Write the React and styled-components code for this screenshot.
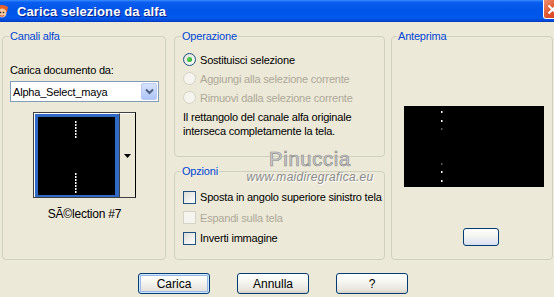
import styled, { createGlobalStyle } from "styled-components";

const GlobalStyle = createGlobalStyle`
  html, body {
    margin: 0;
    padding: 0;
    background: #ece9d8;
  }
  * {
    box-sizing: border-box;
  }
`;

const FONT = `"Liberation Sans", Arial, sans-serif`;

const Window = styled.div`
  position: relative;
  width: 554px;
  height: 297px;
  overflow: hidden;
  display: flex;
  flex-direction: column;
  background: #ece9d8;
  font: 11px ${FONT};
  letter-spacing: -0.2px;
  color: #000;
`;

const TitleBar = styled.div`
  height: 22px;
  flex: none;
  display: flex;
  align-items: center;
  background: linear-gradient(
    #3a8cff 0%,
    #0a5ff0 10%,
    #0055e8 45%,
    #0058ec 80%,
    #0048d8 94%,
    #0036b8 100%
  );
`;

const AppIcon = styled.svg`
  width: 16px;
  height: 16px;
  margin-left: -6px;
  flex: none;
`;

const Title = styled.div`
  margin-left: 7px;
  flex: 1;
  color: #fff;
  font: bold 13px ${FONT};
  text-shadow: 1px 1px 0 #0a1e8a;
  letter-spacing: 0.1px;
`;

const CloseButton = styled.div`
  width: 21px;
  height: 19px;
  margin-right: -10px;
  align-self: flex-start;
  border: 1px solid #fff;
  border-top: none;
  border-radius: 0 0 0 3px;
  background: linear-gradient(135deg, #f09070, #e0542e 50%, #c83a18);
  display: flex;
  align-items: center;
  padding-left: 3px;
`;

const Body = styled.div`
  flex: 1;
  display: flex;
  flex-direction: column;
  padding: 8px 2px 0 2px;
`;

const Panels = styled.div`
  display: flex;
  gap: 6px;
  height: 230px;
`;

const Column = styled.div`
  display: flex;
  flex-direction: column;
  gap: 8px;
  width: ${(p) => p.$width}px;
  margin-left: ${(p) => p.$offset || 0}px;
`;

const Group = styled.fieldset`
  margin: 0;
  padding: ${(p) => p.$pad || "0 6px 0 7px"};
  width: ${(p) => (p.$width ? `${p.$width}px` : "auto")};
  flex: ${(p) => (p.$grow ? 1 : "none")};
  border: 1px solid #d0d0bf;
  border-radius: 4px;
  min-width: 0;
  display: flex;
  flex-direction: column;
`;

const Legend = styled.legend`
  margin-left: ${(p) => p.$shift ?? -1}px;
  padding: 0 1px;
  color: #0046d5;
  line-height: 13px;
`;

const Label = styled.div`
  line-height: 13px;
  margin-top: ${(p) => p.$top || 0}px;
`;

const Combo = styled.div`
  margin-top: 4px;
  height: 21px;
  border: 1px solid #7f9db9;
  background: #fff;
  display: flex;
  align-items: center;
  padding: 0 1px 0 2px;
`;

const ComboText = styled.span`
  flex: 1;
`;

const ComboArrow = styled.div`
  width: 16px;
  height: 17px;
  border: 1px solid #b9cbf3;
  border-radius: 2px;
  background: linear-gradient(#d8e4fc, #bfd1fa 60%, #aec4f6);
  display: flex;
  align-items: center;
  justify-content: center;
`;

const Thumb = styled.div`
  margin: 10px auto 0;
  width: 103px;
  height: 86px;
  display: flex;
  border: 1px solid #404040;
  border-right-color: #000;
  background: #fff;
`;

const ThumbImage = styled.div`
  width: 84px;
  padding: 3px 3px 2px 3px;
  margin: 1px 0 0 1px;
  background: #316ac5;
  display: flex;
`;

const ThumbDrop = styled.div`
  flex: 1;
  background: #ece9d8;
  border-left: 1px solid #404040;
  border-top: 1px solid #fff;
  display: flex;
  align-items: center;
  justify-content: center;
`;

const Caption = styled.div`
  margin-top: 10px;
  text-align: center;
  font-size: 12px;
  line-height: 13px;
`;

const OptionList = styled.div`
  display: flex;
  flex-direction: column;
  margin-top: ${(p) => p.$top || 0}px;
`;

const OptionRow = styled.label`
  height: ${(p) => p.$h || 19}px;
  display: flex;
  align-items: center;
  gap: 4px;
  margin-left: 1px;
  white-space: nowrap;
  color: ${(p) => (p.$disabled ? "#aca899" : "#000")};
`;

const RadioMark = styled.span`
  width: 13px;
  height: 13px;
  border-radius: 50%;
  flex: none;
  border: 1px solid ${(p) => (p.$disabled ? "#d5d3c6" : "#1c5180")};
  background: ${(p) =>
    p.$disabled ? "#f5f4ef" : "linear-gradient(135deg, #dcdcd7, #ffffff)"};
  display: flex;
  align-items: center;
  justify-content: center;
  &::after {
    content: "";
    display: ${(p) => (p.$checked ? "block" : "none")};
    width: 5px;
    height: 5px;
    border-radius: 50%;
    background: radial-gradient(circle at 35% 35%, #55d855, #21a121);
  }
`;

const CheckMark = styled.span`
  width: 13px;
  height: 13px;
  flex: none;
  border: 1px solid ${(p) => (p.$disabled ? "#d5d3c6" : "#1c5180")};
  background: ${(p) =>
    p.$disabled ? "#f5f4ef" : "linear-gradient(135deg, #dcdcd7, #ffffff)"};
`;

const Note = styled.p`
  margin: 3px 0 0 1px;
  line-height: 14px;
`;

const Preview = styled.div`
  margin: 63px 0 0 5px;
`;

const SmallButton = styled.button`
  width: 36px;
  height: 18px;
  margin: 41px 0 0 64px;
  border: 1px solid #003c74;
  border-radius: 3px;
  background: linear-gradient(#ffffff, #f4f4f0 45%, #e3e6f4 80%, #d6dff0);
  padding: 0;
`;

const ButtonRow = styled.div`
  display: flex;
  justify-content: center;
  gap: 27px;
  margin-top: 13px;
  padding-right: 8px;
`;

const Button = styled.button`
  width: 72px;
  height: 21px;
  padding: 0;
  border: 1px solid #003c74;
  border-radius: 3px;
  background: linear-gradient(#ffffff, #f6f6f2 40%, #e6e4dc 85%, #d6d0c5);
  box-shadow: ${(p) =>
    p.$default
      ? "inset 0 0 0 1px #cee7ff, inset 0 0 0 2px #98b8ea"
      : "none"};
  font: 12px ${FONT};
  color: #000;
`;

const Watermark = styled.div`
  position: absolute;
  left: 244px;
  top: 149px;
  width: 132px;
  display: flex;
  flex-direction: column;
  align-items: center;
  pointer-events: none;
  letter-spacing: 0;
`;

const WatermarkName = styled.div`
  font: 20px ${FONT};
  letter-spacing: 0.8px;
  color: #d4d4d4;
  -webkit-text-stroke: 0.7px #8c8c8c;
  line-height: 20px;
`;

const WatermarkSite = styled.div`
  font: italic 12px ${FONT};
  letter-spacing: 0.3px;
  color: #8a8a8a;
  text-shadow: 1px 1px 0 #ffffff;
  line-height: 14px;
  margin-top: 1px;
`;

function Radio({ checked, disabled, children }) {
  return (
    <OptionRow $disabled={disabled}>
      <RadioMark $checked={checked} $disabled={disabled} />
      {children}
    </OptionRow>
  );
}

function Check({ disabled, children }) {
  return (
    <OptionRow $disabled={disabled} $h={20.5}>
      <CheckMark $disabled={disabled} />
      {children}
    </OptionRow>
  );
}

function DashedImage({ width, height, x, dashes }) {
  return (
    <svg width={width} height={height} style={{ display: "block" }}>
      <rect width={width} height={height} fill="#000" />
      {dashes.map(([y, o], i) => (
        <rect key={i} x={x} y={y} width="1.5" height="2" fill="#fff" opacity={o} />
      ))}
    </svg>
  );
}

const thumbDashes = [
  [4, 1], [7, 1], [10, 1], [13, 1], [16, 1], [19, 1],
  [56, 1], [59, 1], [62, 1], [65, 1], [68, 1], [71, 1], [74, 1],
];

const previewDashes = [
  [5, 1], [14, 1], [22, 0.35], [57, 0.35], [65, 1], [74, 1],
];

export default function App() {
  return (
    <>
      <GlobalStyle />
      <Window>
        <TitleBar>
          <AppIcon viewBox="0 0 16 16">
            <path d="M2 4 Q8 0 14 4 L13 9 L3 9 Z" fill="#e8602a" />
            <circle cx="8" cy="10" r="4.5" fill="#f4c9a0" />
            <circle cx="6.5" cy="9.5" r="0.8" fill="#222" />
            <circle cx="9.5" cy="9.5" r="0.8" fill="#222" />
            <path d="M6 12.5 Q8 14 10 12.5" stroke="#b33" fill="none" strokeWidth="0.8" />
          </AppIcon>
          <Title>Carica selezione da alfa</Title>
          <CloseButton>
            <svg width="11" height="11" viewBox="0 0 11 11">
              <path d="M1.5 1.5 L9.5 9.5 M9.5 1.5 L1.5 9.5" stroke="#fff" strokeWidth="2" />
            </svg>
          </CloseButton>
        </TitleBar>

        <Body>
          <Panels>
            <Group $width={164}>
              <Legend>Canali alfa</Legend>
              <Label $top={21}>Carica documento da:</Label>
              <Combo>
                <ComboText>Alpha_Select_maya</ComboText>
                <ComboArrow>
                  <svg width="9" height="7" viewBox="0 0 9 7">
                    <path d="M1 1.5 L4.5 5 L8 1.5" stroke="#4d6185" strokeWidth="2" fill="none" />
                  </svg>
                </ComboArrow>
              </Combo>
              <Thumb>
                <ThumbImage>
                  <DashedImage width={77} height={78} x={37} dashes={thumbDashes} />
                </ThumbImage>
                <ThumbDrop>
                  <svg width="7" height="4" viewBox="0 0 7 4">
                    <path d="M0 0 H7 L3.5 4 Z" fill="#000" />
                  </svg>
                </ThumbDrop>
              </Thumb>
              <Caption>SÃ©lection #7</Caption>
            </Group>

            <Column $width={211} $offset={2}>
              <Group $pad="0 6px 18px 7px">
                <Legend>Operazione</Legend>
                <OptionList $top={7}>
                  <Radio checked>Sostituisci selezione</Radio>
                  <Radio disabled>Aggiungi alla selezione corrente</Radio>
                  <Radio disabled>Rimuovi dalla selezione corrente</Radio>
                </OptionList>
                <Note>
                  Il rettangolo del canale alfa originale
                  <br />
                  interseca completamente la tela.
                </Note>
              </Group>
              <Group $grow>
                <Legend>Opzioni</Legend>
                <OptionList $top={9}>
                  <Check>Sposta in angolo superiore sinistro tela</Check>
                  <Check disabled>Espandi sulla tela</Check>
                  <Check>Inverti immagine</Check>
                </OptionList>
              </Group>
            </Column>

            <Group $width={162} $pad="0 6px 0 7px">
              <Legend $shift={-2}>Anteprima</Legend>
              <Preview>
                <DashedImage width={140} height={81} x={37} dashes={previewDashes} />
              </Preview>
              <SmallButton />
            </Group>
          </Panels>

          <ButtonRow>
            <Button $default>Carica</Button>
            <Button>Annulla</Button>
            <Button>?</Button>
          </ButtonRow>
        </Body>

        <Watermark>
          <WatermarkName>Pinuccia</WatermarkName>
          <WatermarkSite>www.maidiregrafica.eu</WatermarkSite>
        </Watermark>
      </Window>
    </>
  );
}
